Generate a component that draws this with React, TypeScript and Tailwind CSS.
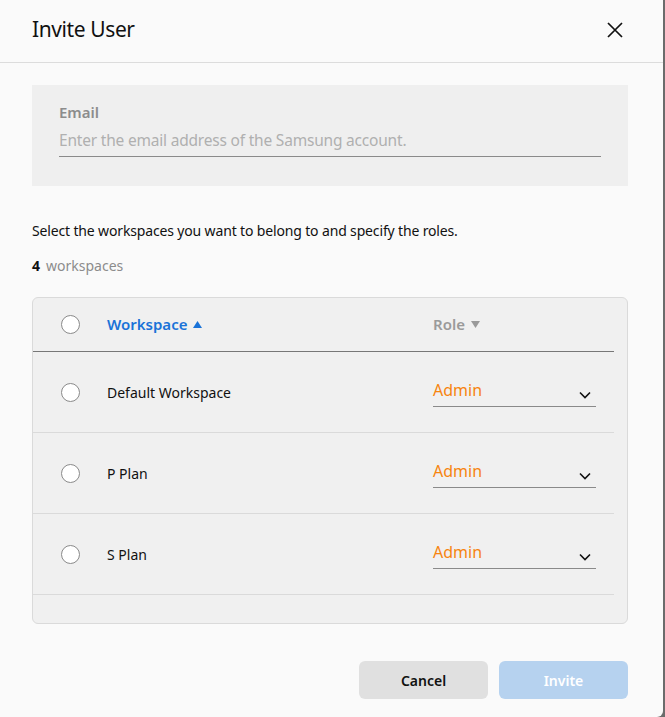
import React from "react";

const rows = ["Default Workspace", "P Plan", "S Plan"];

function Radio() {
  return <span className="block h-[19px] w-[19px] shrink-0 rounded-full border border-[#8a8a8a] bg-white" />;
}

function Chevron() {
  return (
    <svg width="12" height="8" viewBox="0 0 12 8" fill="none">
      <path d="M1 1.5 6 6.5 11 1.5" stroke="#111" strokeWidth="1.6" />
    </svg>
  );
}

export default function App() {
  return (
    <div className="min-h-[717px] bg-[#6b6b6b]" style={{ fontFamily: '"Noto Sans", "Open Sans", sans-serif' }}>
      <div className="flex h-[717px] w-[663px] flex-col rounded-br-[6px] bg-[#fafafa]">
        {/* header */}
        <div className="flex h-[63px] items-center justify-between border-b border-[#dcdcdc] pb-[3px] pl-[32px] pr-[40px]">
          <h1 className="text-[21px] leading-none tracking-[-0.4px] text-[#111]">Invite User</h1>
          <svg width="16" height="16" viewBox="0 0 16 16" fill="none">
            <path d="M1 1 15 15M15 1 1 15" stroke="#111" strokeWidth="1.7" />
          </svg>
        </div>

        <div className="flex flex-1 flex-col px-[32px] pr-[35px]">
          {/* email */}
          <div className="mt-[22px] h-[101px] bg-[#efefef] px-[27px] pt-[17px]">
            <div className="text-[15px] font-semibold leading-5 text-[#8c8c8c]">Email</div>
            <div className="mt-[8px] border-b border-[#8a8a8a] pb-[6px] text-[15.5px] leading-5 tracking-[-0.2px] text-[#b0b0b0]">
              Enter the email address of the Samsung account.
            </div>
          </div>

          <p className="mt-[35px] text-[14px] leading-5 tracking-[-0.15px] text-[#111]">
            Select the workspaces you want to belong to and specify the roles.
          </p>
          <p className="mt-[15px] text-[14px] leading-5">
            <span className="font-bold text-[#111]">4</span>
            <span className="ml-[6px] text-[#8c8c8c]">workspaces</span>
          </p>

          {/* table */}
          <div className="mt-[21px] h-[327px] rounded-[6px] border border-[#dadada] bg-[#f0f0f0] pr-[13px]">
            <div className="flex h-[54px] items-center border-b border-[#777]">
              <div className="flex w-[74px] justify-center pl-[1px]">
                <Radio />
              </div>
              <div className="flex w-[326px] items-center gap-[6px] text-[15px] font-semibold text-[#1a73d8]">
                Workspace
                <svg width="9" height="7" viewBox="0 0 9 7">
                  <path d="M4.5 0 9 7H0z" fill="#1a73d8" />
                </svg>
              </div>
              <div className="flex items-center gap-[6px] text-[15px] font-semibold text-[#9a9a9a]">
                Role
                <svg width="9" height="7" viewBox="0 0 9 7">
                  <path d="M0 0h9L4.5 7z" fill="#9a9a9a" />
                </svg>
              </div>
            </div>
            {rows.map((name) => (
              <div key={name} className="flex h-[81px] items-center border-b border-[#dadada]">
                <div className="flex w-[74px] justify-center pl-[1px]">
                  <Radio />
                </div>
                <div className="w-[326px] text-[14px] text-[#111]">{name}</div>
                <div className="mt-[2px] flex w-[163px] items-end justify-between border-b border-[#8a8a8a] pb-[6px] pr-[5px]">
                  <span className="text-[16px] leading-5 text-[#f7840f]">Admin</span>
                  <span className="pb-[1px]">
                    <Chevron />
                  </span>
                </div>
              </div>
            ))}
          </div>

          {/* buttons */}
          <div className="mt-[37px] flex justify-end gap-[11px]">
            <button className="h-[38px] w-[129px] rounded-[6px] bg-[#e0e0e0] text-[14px] font-semibold text-[#111]">
              Cancel
            </button>
            <button className="h-[38px] w-[129px] rounded-[6px] bg-[#b6d2ef] text-[14px] font-semibold text-white">
              Invite
            </button>
          </div>
        </div>
      </div>
    </div>
  );
}
